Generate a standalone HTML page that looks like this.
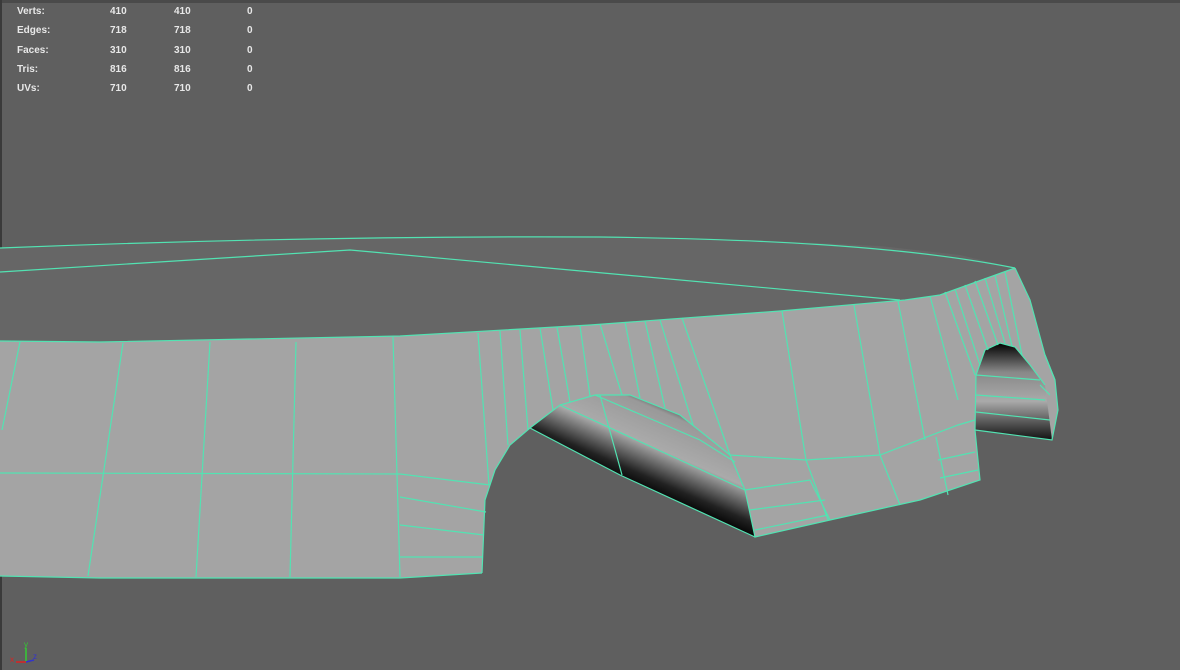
<!DOCTYPE html>
<html><head><meta charset="utf-8"><style>
html,body{margin:0;padding:0;background:#5f5f5f;}
.w{position:relative;width:1180px;height:670px;overflow:hidden;background:#5f5f5f;font-family:"Liberation Sans",sans-serif;}
.hud{position:absolute;left:17px;top:2px;color:#e8e8e8;font-size:10px;font-weight:bold;line-height:19.5px;}
.hud span{position:absolute;white-space:nowrap}
</style></head><body><div class="w">
<svg width="1180" height="670" style="position:absolute;left:0;top:0">
<defs>
<linearGradient id="ag" gradientUnits="userSpaceOnUse" x1="640" y1="490" x2="680" y2="398">
<stop offset="0" stop-color="#000"/><stop offset="0.15" stop-color="#222"/><stop offset="0.45" stop-color="#aaa"/><stop offset="0.8" stop-color="#999"/><stop offset="1" stop-color="#111"/></linearGradient>
<linearGradient id="ag2" x1="0" y1="0" x2="0" y2="1">
<stop offset="0" stop-color="#000"/><stop offset="0.3" stop-color="#888"/><stop offset="0.6" stop-color="#aaa"/><stop offset="1" stop-color="#111"/></linearGradient>
</defs>
<rect x="0" y="0" width="1180" height="3" fill="#4a4a4a"/>
<rect x="0" y="0" width="2" height="670" fill="#3a3a3a"/>
<polygon points="0,248 200,241 400,237 600,237 750,240 880,246 960,255 1015,268 940,295 905,300 780,311 590,325 400,336 100,342 0,341" fill="#666"/>
<polygon points="0,341 100,342 400,336 590,325 780,311 905,300 940,295 1015,268 1030,300 1045,355 1055,380 1058,410 1052,440 975,430 980,480 920,500 830,520 755,537 745,490 730,455 680,415 630,395 595,395 560,405 530,428 510,445 495,470 485,500 482,573 400,578 100,578 0,576" fill="#a4a4a4"/>
<polygon points="530,428 560,405 595,395 630,395 680,415 730,455 745,490 755,537 620,475" fill="url(#ag)"/>
<polygon points="976,375 985,350 1000,343 1015,347 1030,365 1045,385 1052,440 975,430" fill="url(#ag2)"/>
<g fill="none" stroke="#52e3b2" stroke-width="1.2">
<path d="M0,248 C200,240 400,236 600,237 C750,239 900,245 1015,268"/>
<path d="M0,272 L350,250 L900,300"/>
<path d="M0,341 L100,342 L400,336 L590,325 L780,311 L905,300 L940,295 L1015,268"/>
<path d="M1015,268 L1030,300 L1045,355 L1055,380 L1058,410 L1052,440 L975,430"/>
<path d="M482,573 L400,578 L100,578 L0,576"/>
<path d="M482,573 L485,500 L495,470 L510,445 L530,428 L560,405 L595,395 L630,395 L680,415 L730,455 L745,490 L755,537 L830,520 L920,500 L980,480 L975,430 L976,375 L985,350 L1000,343 L1015,347 L1030,365 L1045,385"/>
<path d="M530,428 L620,475 L755,537"/>
<path d="M560,405 L680,460 L745,490 M595,395 L700,440 L735,462 M600,395 L622,475"/>
<path d="M20,342 L2,430 M123,343 L88,576 M210,342 L196,577 M296,342 L290,577 M393,337 L400,577"/>
<path d="M0,473 L400,474 L490,485 M400,497 L486,512 M400,525 L484,535 M400,557 L483,557"/>
<path d="M478,333 L489,485 M500,331 L508,445 M520,330 L528,430 M540,328 L553,410 M557,327 L570,402 M580,326 L590,396 M600,324 L622,395 M625,322 L640,398 M645,321 L665,408 M660,320 L693,425 M682,318 L730,455"/>
<path d="M782,311 L806,460 L828,520 M854,305 L880,455 M898,301 L925,440 M930,296 L958,400"/>
<path d="M730,455 L806,460 L880,455 L958,425 L975,420 M745,490 L810,480 L830,520 M750,510 L825,500 M755,530 L828,515"/>
<path d="M880,455 L900,505 M936,437 L948,495 M938,460 L975,452 M940,478 L978,470"/>
<path d="M945,292 L975,375 M955,289 L980,365 M965,285 L988,350 M975,281 L998,345 M985,278 L1005,343 M995,275 L1012,346 M1005,272 L1022,355"/>
<path d="M976,375 L1040,380 M976,395 L1045,400 M976,412 L1050,420 M1045,355 L1055,380 M1040,385 L1050,395"/>
</g>
<g stroke-width="1.5">
<line x1="26" y1="662" x2="26" y2="648" stroke="#3c3"/>
<line x1="26" y1="662" x2="16" y2="662" stroke="#d22"/>
<line x1="26" y1="662" x2="34" y2="660" stroke="#33c"/>
</g>
<text x="24" y="647" fill="#3c3" font-size="8" font-family="Liberation Sans">y</text>
<text x="10" y="662" fill="#d22" font-size="8" font-family="Liberation Sans">x</text>
<text x="33" y="659" fill="#33c" font-size="8" font-family="Liberation Sans">z</text>
</svg>
<div class="hud">
<span style="top:0;left:0">Verts:</span><span style="top:0;left:93px">410</span><span style="top:0;left:157px">410</span><span style="top:0;left:230px">0</span>
<span style="top:19.3px;left:0">Edges:</span><span style="top:19.3px;left:93px">718</span><span style="top:19.3px;left:157px">718</span><span style="top:19.3px;left:230px">0</span>
<span style="top:38.6px;left:0">Faces:</span><span style="top:38.6px;left:93px">310</span><span style="top:38.6px;left:157px">310</span><span style="top:38.6px;left:230px">0</span>
<span style="top:57.9px;left:0">Tris:</span><span style="top:57.9px;left:93px">816</span><span style="top:57.9px;left:157px">816</span><span style="top:57.9px;left:230px">0</span>
<span style="top:77.2px;left:0">UVs:</span><span style="top:77.2px;left:93px">710</span><span style="top:77.2px;left:157px">710</span><span style="top:77.2px;left:230px">0</span>
</div>
</div></body></html>
